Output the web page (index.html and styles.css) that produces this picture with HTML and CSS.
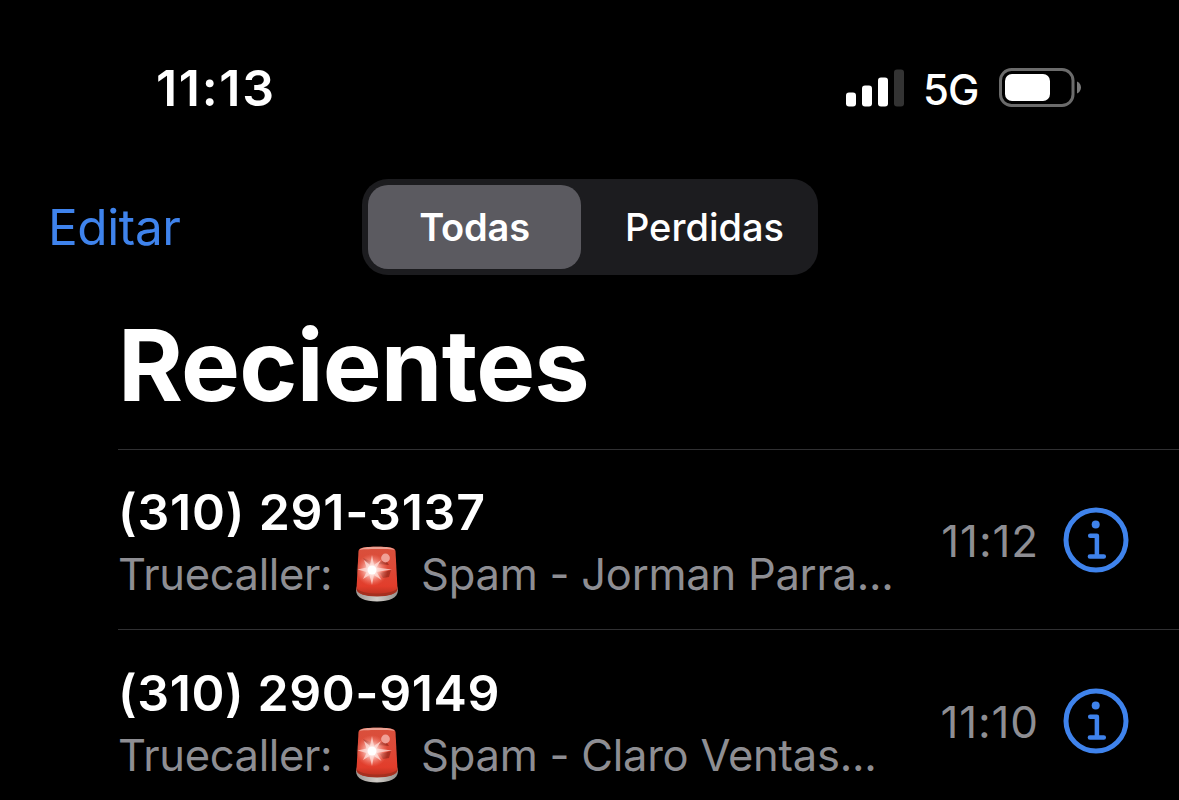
FILE: index.html
```html
<!DOCTYPE html>
<html lang="es">
<head>
  <meta charset="UTF-8">
  <meta name="viewport" content="width=device-width, initial-scale=1.0">
  <title>Recientes</title>
  <link rel="stylesheet" href="styles.css">
</head>
<body>
  <!-- shared icons -->
  <svg class="defs" width="0" height="0">
    <defs>
      <linearGradient id="lamp-glass" x1="0" y1="0" x2="0" y2="1">
        <stop offset="0" stop-color="#d9503c"/>
        <stop offset="0.4" stop-color="#dd4a38"/>
        <stop offset="0.8" stop-color="#e23d2b"/>
        <stop offset="1" stop-color="#b5301f"/>
      </linearGradient>
      <linearGradient id="lamp-base" x1="0" y1="0" x2="1" y2="0">
        <stop offset="0" stop-color="#9a9692"/>
        <stop offset="0.5" stop-color="#d0ccc7"/>
        <stop offset="1" stop-color="#94908c"/>
      </linearGradient>
      <radialGradient id="lamp-glow">
        <stop offset="0" stop-color="#fff"/>
        <stop offset="0.35" stop-color="#ffd9d3" stop-opacity="0.85"/>
        <stop offset="1" stop-color="#ff8a78" stop-opacity="0"/>
      </radialGradient>
    </defs>
    <symbol id="siren" viewBox="0 0 44 56">
      <path d="M1 44 C1 52 10 55.5 22 55.5 S43 52 43 44 L42 40 H2 Z" fill="url(#lamp-base)"/>
      <path d="M3.5 5 C4 2 8 .8 22 .8 S40 2 40.5 5 L42.5 43 C42.5 47.5 34 50 22 50 S1.5 47.5 1.5 43 Z" fill="url(#lamp-glass)"/>
      <path d="M1.7 42 C4 46 13 47.5 22 47.5 S40 46 42.3 42 L42.5 43 C42.5 47.5 34 50.5 22 50.5 S1.5 47.5 1.5 43 Z" fill="#a5301f"/>
      <path d="M4.5 4 C6 1.5 12 .8 22 .8 S38 1.5 39.5 4 C36 2.8 8 2.8 4.5 4 Z" fill="#eba193"/>
      <path d="M8 12 L17 16 L13 20 Z M23 18 L30 13 L34 19 Z M25 27 L36 24 L34 31 L28 32 Z" fill="#8e2519" opacity="0.65"/>
      <circle cx="30.5" cy="12" r="4.4" fill="#f0a096"/>
      <circle cx="17" cy="24" r="16" fill="url(#lamp-glow)"/>
      <path d="M17 9 L19 19 L26 14 L21.5 21.5 L37 23.5 L21.5 26 L26.5 34 L19 29 L17 39 L14.5 29 L8 33 L11.5 26 L2.5 23.5 L11.5 21.5 L9 14 L15 19 Z" fill="#ffe4df" opacity="0.7"/>
      <circle cx="17" cy="24" r="4.5" fill="#fff"/>
    </symbol>
    <symbol id="info" viewBox="0 0 66 66">
      <circle cx="33" cy="33" r="30" fill="none" stroke="#3f83ec" stroke-width="5"/>
      <circle cx="32.7" cy="17.4" r="4" fill="#3f83ec"/>
      <path d="M27.2 28.8 H33.9 V49.6 M26.9 49.6 H40.8" fill="none" stroke="#3f83ec" stroke-width="4.5" stroke-linecap="round" stroke-linejoin="round"/>
    </symbol>
  </svg>

  <div class="status-bar">
    <span class="clock">11:13</span>
    <div class="status-right">
      <svg class="signal" width="58" height="38" viewBox="0 0 58 38">
        <rect x="0" y="23.5" width="10" height="14" rx="3" fill="#fff"/>
        <rect x="16" y="16.5" width="10" height="21" rx="3" fill="#fff"/>
        <rect x="32" y="8.5" width="10" height="29" rx="3" fill="#fff"/>
        <rect x="48" y="0.5" width="10" height="37" rx="3" fill="#333"/>
      </svg>
      <span class="network">5G</span>
      <svg class="battery" width="83" height="39" viewBox="0 0 83 39">
        <rect x="1.5" y="1.5" width="72.5" height="36" rx="11" fill="none" stroke="#6b6b6b" stroke-width="3"/>
        <rect x="6" y="6" width="45" height="27" rx="7" fill="#fff"/>
        <path d="M78 13.5 C80.6 14.6 82 17 82 19.5 S80.6 24.4 78 25.5 Z" fill="#7a7a7a"/>
      </svg>
    </div>
  </div>

  <nav class="nav">
    <a class="edit" href="#">Editar</a>
    <div class="segmented">
      <button class="segment active">Todas</button>
      <button class="segment">Perdidas</button>
    </div>
  </nav>

  <h1 class="title">Recientes</h1>

  <ul class="calls">
    <li class="call">
      <div class="call-main">
        <div class="number">(310) 291-3137</div>
        <div class="label"><span class="app">Truecaller:</span><svg class="siren"><use href="#siren"/></svg><span class="who">Spam - Jorman Parra...</span></div>
      </div>
      <span class="time">11:12</span>
      <svg class="info"><use href="#info"/></svg>
    </li>
    <li class="call">
      <div class="call-main">
        <div class="number">(310) 290-9149</div>
        <div class="label"><span class="app">Truecaller:</span><svg class="siren"><use href="#siren"/></svg><span class="who">Spam - Claro Ventas...</span></div>
      </div>
      <span class="time">11:10</span>
      <svg class="info"><use href="#info"/></svg>
    </li>
  </ul>
</body>
</html>
```
FILE: styles.css
```css
* {
  box-sizing: border-box;
}
body {
  margin: 0;
  height: 800px;
  overflow: hidden;
  background: #000;
  color: #fff;
  font-family: Inter, "Liberation Sans", sans-serif;
  white-space: nowrap;
}
.defs {
  display: block;
}
.status-bar {
  display: flex;
  justify-content: space-between;
  align-items: center;
  height: 176px;
  padding: 0 97px 0 156px;
}
.clock {
  font-size: 50px;
  font-weight: 600;
  letter-spacing: 1.7px;
}
.status-right {
  display: flex;
  align-items: center;
}
.network {
  width: 56px;
  margin: 3px 20px 0 19px;
  font-size: 42px;
  font-weight: 500;
  letter-spacing: -1px;
}
.battery {
  margin-bottom: 1px;
}
.nav {
  display: grid;
  grid-template-columns: 1fr auto 1fr;
  align-items: center;
  height: 102px;
}
.edit {
  padding-left: 48px;
  font-size: 49.5px;
  color: #3f83ec;
  text-decoration: none;
  letter-spacing: -0.4px;
}
.segmented {
  display: flex;
  width: 456px;
  height: 96px;
  padding: 6px;
  border-radius: 26px;
  background: #1c1c1f;
}
.segment {
  width: 231px;
  padding: 0 0 0 17px;
  border: none;
  border-radius: 20px;
  background: none;
  color: #fff;
  font-family: inherit;
  font-size: 38px;
  font-weight: 475;
  text-align: center;
}
.segment.active {
  width: 213px;
  padding: 0 0 0 1px;
  background: #5b5a60;
  font-weight: 600;
  letter-spacing: -0.2px;
}
.title {
  margin: 0;
  padding-left: 118px;
  height: 171px;
  line-height: 174px;
  font-size: 99px;
  font-weight: 700;
  letter-spacing: -0.8px;
}
.calls {
  margin: 0 0 0 118px;
  padding: 0;
  list-style: none;
}
.call {
  display: flex;
  align-items: center;
  height: 180px;
  padding-right: 50px;
  border-top: 1px solid #303032;
}
.call + .call {
  height: 182px;
}
.call-main {
  flex: 1;
  padding-top: 6px;
}
.number {
  height: 62px;
  line-height: 62px;
  font-size: 50px;
  font-weight: 600;
  letter-spacing: 0.8px;
}
.call + .call .number {
  letter-spacing: 0.6px;
}
.label {
  display: flex;
  align-items: center;
  height: 62px;
  font-size: 43.5px;
  letter-spacing: -0.35px;
  color: #8e8e93;
}
.app {
  width: 237px;
}
.siren {
  width: 44px;
  height: 56px;
  margin-right: 22px;
}
.who {
  letter-spacing: -0.25px;
}
.time {
  margin-right: 24px;
  padding-top: 3px;
  font-size: 44px;
  letter-spacing: 0.9px;
  color: #8e8e93;
}
.info {
  width: 66px;
  height: 66px;
}
```
